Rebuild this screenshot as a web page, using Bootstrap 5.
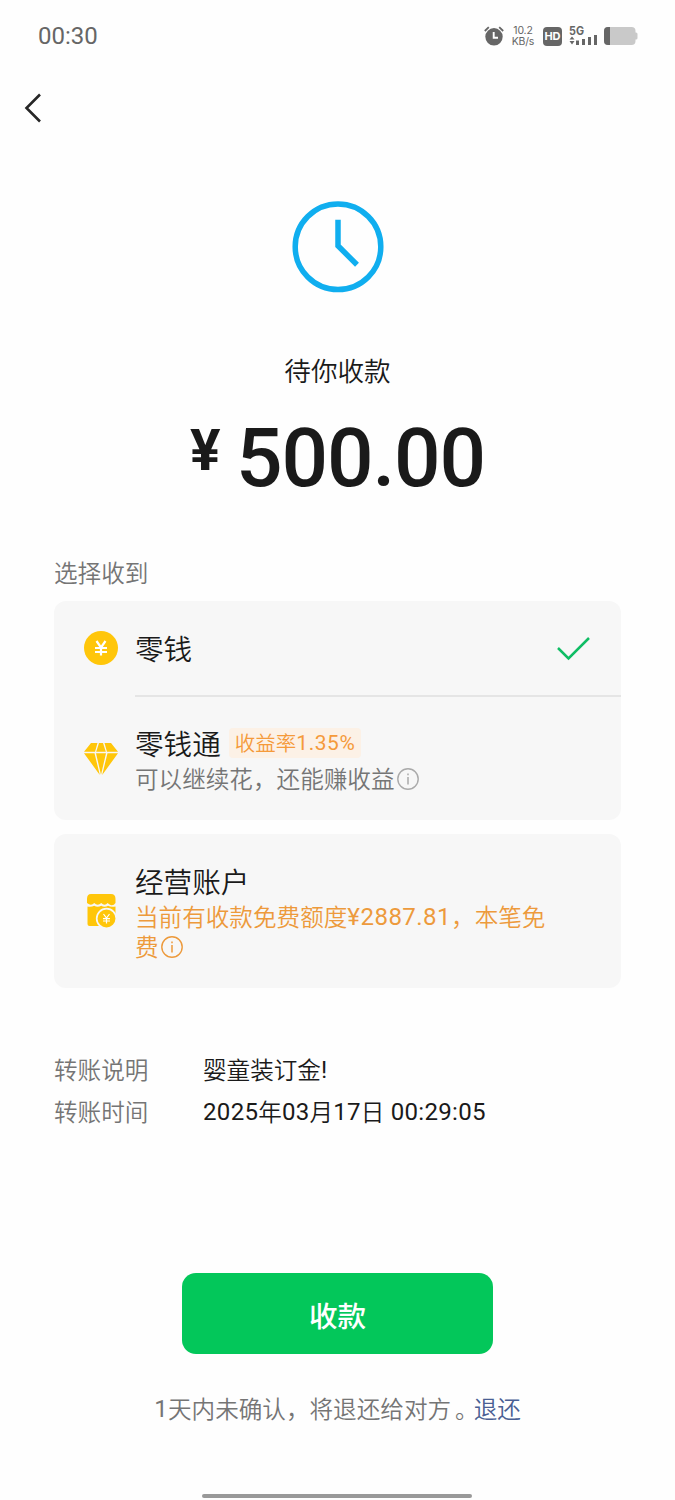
<!DOCTYPE html>
<html lang="zh-CN">
<head>
<meta charset="utf-8">
<meta name="viewport" content="width=device-width, initial-scale=1">
<title>待你收款</title>
<link href="https://cdn.jsdelivr.net/npm/bootstrap@5.3.0/dist/css/bootstrap.min.css" rel="stylesheet">
<style>
  body { font-family: "Noto Sans CJK SC", sans-serif; color: #1a1a1a; background: #fefefe; font-size: 23.6px; line-height: 32px; font-weight: 350; }
  svg { display: block; flex-shrink: 0; }
  .screen { height: 1500px; overflow: hidden; }
  .latin { font-family: Roboto, sans-serif; font-weight: 400; font-size: 1.02em; line-height: 1; letter-spacing: .3px; vertical-align: 1px; }
  .status { height: 72px; padding: 0 37px 0 38px; color: #666; }
  .clock-text { font: 400 24px/32px Roboto, sans-serif; }
  .speed { font: 400 10.5px/11px Inter, sans-serif; letter-spacing: -.2px; width: 24px; margin-left: 7px; margin-right: 1px; }
  .hd { width: 19px; height: 19px; border-radius: 4px; background: #666; color: #fff; font: 700 11px/19px Inter, sans-serif; margin-left: 7px; }
  .signal { margin-left: 6px; }
  .battery { margin-left: 6px; }
  .back { height: 72px; padding-left: 24px; }
  .state-icon { padding-top: 56px; height: 204px; }
  .state-text { font-size: 26.6px; height: 44px; line-height: 43px; }
  .amount { height: 164px; padding-top: 21px; font: 500 82px/90px Roboto, sans-serif; letter-spacing: -1.1px; color: #1a1a1a; }
  .yen { font-size: 57px; font-weight: 700; line-height: 76px; width: 46px; }
  .muted { color: #757575; }
  .content { padding: 0 54px; }
  .panel { background: #f7f7f7; border: 0; border-radius: 12px; color: inherit; overflow: hidden; }
  .panel-one { margin-top: 13px; }
  .panel-two { height: 154px; margin-top: 14px; }
  .panel-icon { width: 34px; margin: 0 17px 0 30px; }
  .title-text { font-size: 28.6px; line-height: 40px; }
  .row-one { height: 94px; }
  .row-two { height: 123px; }
  .line { height: 2px; margin-left: 81px; background: #e5e5e5; }
  .tick { margin-right: 26px; }
  .tag { font-size: 20.5px; line-height: 29px; height: 30px; padding: 0 6px; margin-left: 8px; border-radius: 4px; background: #fcf1e6; color: #f59a3a; }
  .tag .latin { letter-spacing: .6px; }
  .sub { line-height: 30px; padding-bottom: 2px; }
  .desc { line-height: 30px; padding-bottom: 1px; }
  .desc .latin { letter-spacing: .45px; }
  .orange { color: #ed9a3c; }
  .info { display: inline-block; vertical-align: -2px; margin-left: 2px; }
  .details { margin-top: 61px; line-height: 41.5px; }
  .label-col { width: 149px; }
  .btn-receive { width: 311px; height: 81px; border-radius: 14px; background: #03c75a; color: #fff; font-size: 28.6px; font-weight: 500; line-height: 79px; padding: 2px 0 0; border: 0; margin-top: 141px; }
  .btn-receive:hover { background: #03b853; color: #fff; }
  .footnote { margin-top: 38px; height: 32px; color: #757575; }
  .footnote a { color: #4a5f94; }
  .stop { padding-left: 4px; margin-right: -5px; }
  .home-bar { width: 270px; height: 4px; border-radius: 2px; background: #999; margin: 70px 0 0 202px; }
</style>
</head>
<body>
<main class="screen">
  <header class="status d-flex align-items-center">
    <div class="clock-text me-auto">00:30</div>
    <svg width="20" height="20" viewBox="0 0 20 20"><circle cx="10" cy="10.800" r="8.700" fill="#666"/><path d="M.8 5 4.800 1.200M19.200 5 15.200 1.200" stroke="#666" stroke-width="1.800"/><path d="M9.700 6v5.800H14" fill="none" stroke="#fff" stroke-width="1.900"/></svg>
    <div class="speed text-center"><div>10.2</div><div>KB/s</div></div>
    <div class="hd text-center">HD</div>
    <svg class="signal" width="30" height="24" viewBox="0 0 30 24"><text x="1" y="10.500" font-family="Inter" font-size="11.500" font-weight="700" textLength="15" lengthAdjust="spacingAndGlyphs" fill="#666">5G</text><path d="M1.500 15.500h5L4 12.500zM1.500 17h5L4 20.500zM8 16.500h3V21H8zM14 15h3v6h-3zM20 13h3v8h-3zM26 11h3v10h-3z" fill="#666"/></svg>
    <svg class="battery" width="34" height="18" viewBox="0 0 34 18"><path d="M4 0h23.500a4 4 0 0 1 4 4v1.500h.5a1.500 1.500 0 0 1 1.500 1.500v4a1.500 1.500 0 0 1-1.500 1.500h-.5V14a4 4 0 0 1-4 4H4a4 4 0 0 1-4-4V4a4 4 0 0 1 4-4z" fill="#c9c9c9"/><path d="M6 0H4a4 4 0 0 0-4 4v10a4 4 0 0 0 4 4h2z" fill="#666"/></svg>
  </header>
  <nav class="back d-flex align-items-center">
    <svg width="18" height="30" viewBox="0 0 18 30"><path d="M16 1.500 2.500 15 16 28.500" fill="none" stroke="#262626" stroke-width="2.600"/></svg>
  </nav>
  <div class="state-icon d-flex justify-content-center">
    <svg width="94" height="94" viewBox="0 0 94 94"><g fill="none" stroke="#10aeef" stroke-width="5.500"><circle cx="47" cy="46.800" r="42.800"/><path d="M47 19.800v26L66 64.800"/></g></svg>
  </div>
  <div class="state-text text-center">待你收款</div>
  <div class="amount d-flex justify-content-center"><span class="yen">¥</span><span>500.00</span></div>
  <section class="content">
    <div class="muted">选择收到</div>
    <div class="card panel panel-one">
      <div class="row-one d-flex align-items-center">
        <div class="panel-icon"><svg width="34" height="34" viewBox="0 0 34 34"><circle cx="17" cy="17" r="17" fill="#ffc60a"/><path d="M12.500 10 17 16.500 21.500 10M17 16v8.500M11 17h12M11 21h12" fill="none" stroke="#fff" stroke-width="2.200"/></svg></div>
        <div class="title-text me-auto">零钱</div>
        <svg class="tick" width="38" height="26" viewBox="0 0 38 26"><path d="M1 13 11.500 23.500 32 3" fill="none" stroke="#10bd65" stroke-width="2.500"/></svg>
      </div>
      <div class="line"></div>
      <div class="row-two d-flex align-items-center">
        <div class="panel-icon"><svg width="34" height="34" viewBox="0 0 34 34"><path d="M7 1h6.500L11 9.800H0zM15 1h4l2.800 8.800h-9.600zM20.500 1H27l7 8.800H23zM0 11.200h10.500L15.800 33zM12 11.200h10l-5 21.500zM23.500 11.200H34L18.200 33z" fill="#ffc60a"/></svg></div>
        <div>
          <div class="title-text d-flex align-items-center">零钱通<span class="tag">收益率<span class="latin">1.35%</span></span></div>
          <div class="muted sub">可以继续花，还能赚收益<svg class="info" width="22" height="22" viewBox="0 0 22 22"><circle cx="11" cy="11" r="10.200" fill="none" stroke="#aaa" stroke-width="1.400"/><path d="M11 9v7.500M11 5.500v1.800" stroke="#aaa" stroke-width="1.500"/></svg></div>
        </div>
      </div>
    </div>
    <div class="card panel panel-two flex-row align-items-center">
      <div class="panel-icon"><svg width="34" height="34" viewBox="0 0 34 34"><path d="M7 0h20q4.500 0 4.500 5v4q-2 3-5 2-2-1-2.800-2-3 3.500-6.500 0-3.500 3.500-7 0-3 3.500-7.200 0V5q0-5 4-5z" fill="#ffc60a"/><path d="M3.500 12.500q3.500 1 6.700-.8 3.500 2.200 7 0 3.500 2.200 6.800 0 3 1.800 7.500 .8v19.500H5.500q-2 0-2-2z" fill="#ffc60a"/><path d="M23 33h10V20z" fill="#f7f7f7"/><circle cx="22.500" cy="24.500" r="9.800" fill="#ffc60a" stroke="#f7f7f7" stroke-width="1.700"/><path d="M19.500 20l3 4 3-4M22.500 24v5.500M19 24.700h7M19 27h7" fill="none" stroke="#fff" stroke-width="1.200"/></svg></div>
      <div>
        <div class="title-text">经营账户</div>
        <div class="orange desc">当前有收款免费额度<span class="latin">¥2887.81</span>，本笔免<br>费<svg class="info" width="22" height="22" viewBox="0 0 22 22"><circle cx="11" cy="11" r="10.200" fill="none" stroke="#ed9a3c" stroke-width="1.400"/><path d="M11 9v7.500M11 5.500v1.800" stroke="#ed9a3c" stroke-width="1.500"/></svg></div>
      </div>
    </div>
    <div class="details">
      <div class="d-flex"><div class="label-col muted">转账说明</div><div>婴童装订金<span class="latin">!</span></div></div>
      <div class="d-flex"><div class="label-col muted">转账时间</div><div><span class="latin">2025</span>年<span class="latin">03</span>月<span class="latin">17</span>日<span class="latin"> 00:29:05</span></div></div>
    </div>
  </section>
  <button type="button" class="btn btn-receive d-block mx-auto">收款</button>
  <div class="footnote text-center"><span class="latin">1</span>天内未确认，将退还给对方<span class="stop">。</span><a href="#" class="text-decoration-none">退还</a></div>
  <div class="home-bar"></div>
</main>
<script src="https://cdn.jsdelivr.net/npm/bootstrap@5.3.0/dist/js/bootstrap.bundle.min.js"></script>
</body>
</html>
